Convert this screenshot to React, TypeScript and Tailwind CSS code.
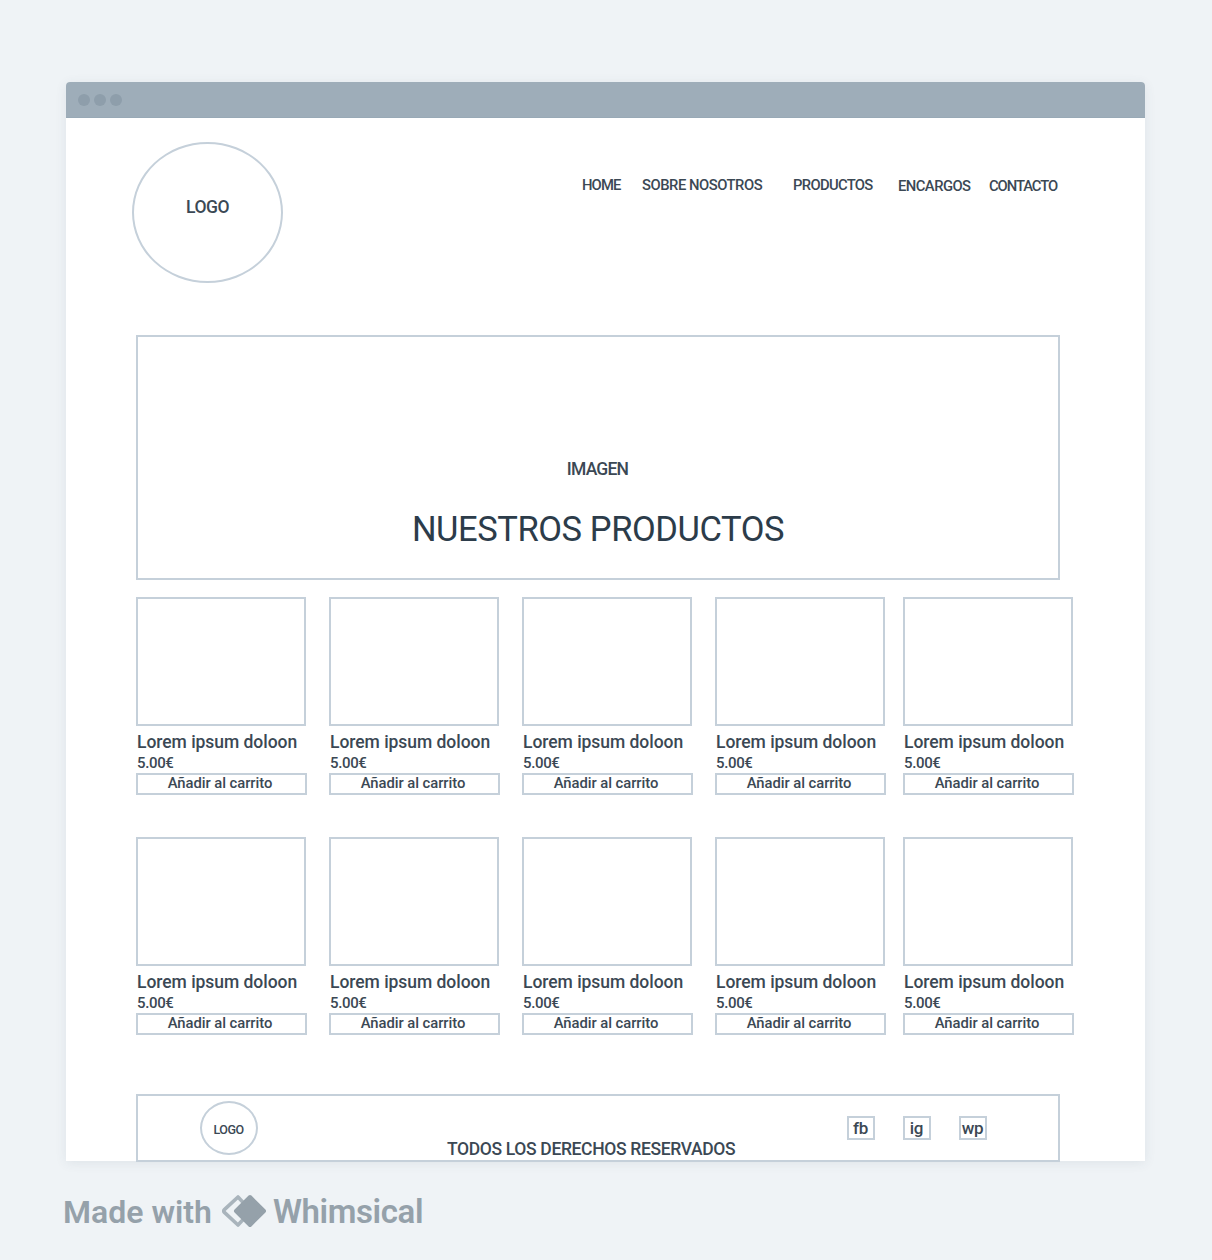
const navItems = [
  { label: 'HOME', box: 'w-[60px] tracking-[-0.9px]' },
  { label: 'SOBRE NOSOTROS', box: 'w-[151px] tracking-[-0.48px]' },
  { label: 'PRODUCTOS', box: 'w-[105px] tracking-[-0.68px]' },
  { label: 'ENCARGOS', box: 'w-[91px] pt-[0.5px] tracking-[-0.55px]' },
  { label: 'CONTACTO', box: 'pt-[0.5px] tracking-[-1.08px]' },
];

const cardOffsets = ['', 'ml-[22px]', 'ml-[22px]', 'ml-[22px]', 'ml-[17px]'];

function ProductCard({ offset }: { offset: string }) {
  return (
    <article className={`w-[171px] shrink-0 ${offset}`}>
      <div className="h-[129px] w-[170px] border-2 border-[#c5d0da]" />
      <h2 className="mt-[6px] pl-px text-[17.5px] leading-5 font-medium tracking-[-0.04px] whitespace-nowrap">
        Lorem ipsum doloon
      </h2>
      <p className="mt-px pl-px text-[15px] leading-5 tracking-[-0.35px] font-medium">5.00€</p>
      <button className="flex h-[22px] w-full items-center justify-center border-2 border-[#c5d0da] pr-[3px] pb-[2px] text-[14.8px] font-medium tracking-[-0.05px]">
        Añadir al carrito
      </button>
    </article>
  );
}

function ProductRow() {
  return (
    <div className="flex h-[198px]">
      {cardOffsets.map((offset, i) => (
        <ProductCard key={i} offset={offset} />
      ))}
    </div>
  );
}

function SocialBox({ label }: { label: string }) {
  return (
    <a className="flex h-6 w-7 items-center justify-center border-2 border-[#c5d0da] pr-px text-[17px] leading-5 font-medium tracking-[-0.3px]">
      {label}
    </a>
  );
}

export default function App() {
  return (
    <div className="h-[1260px] w-[1212px] overflow-hidden bg-[#eff3f6] pt-[82px] pl-[66px] font-['Roboto',sans-serif] text-[#3b4854]">
      <div className="h-[1079px] w-[1079px] rounded-t-[4px] bg-white shadow-[0_2px_12px_rgba(60,80,100,0.09)]">
        <div className="flex h-9 items-center gap-1 rounded-t-[4px] border-b border-[#98a9b6] bg-[#9eadb9] pl-3">
          <span className="size-3 rounded-full bg-[#8e9eab]" />
          <span className="size-3 rounded-full bg-[#8e9eab]" />
          <span className="size-3 rounded-full bg-[#8e9eab]" />
        </div>

        <header className="flex h-[217px] items-start pt-6 pl-[66px]">
          <div className="flex h-[141px] w-[151px] items-center justify-center rounded-[50%] border-2 border-[#c5d0da] pb-[10px] text-[17.5px] font-medium tracking-[-0.5px]">
            LOGO
          </div>
          <nav className="mt-[33px] ml-[299px] flex text-[14.8px] leading-5 font-medium whitespace-nowrap">
            {navItems.map((item) => (
              <a key={item.label} className={item.box}>
                {item.label}
              </a>
            ))}
          </nav>
        </header>

        <main className="pl-[70px]">
          <section className="flex h-[245px] w-[924px] flex-col items-center border-2 border-[#c5d0da] pt-[122px]">
            <p className="pr-px text-[17.5px] leading-5 font-medium tracking-[-0.8px]">IMAGEN</p>
            <h1 className="mt-[30px] text-[34.5px] leading-10 tracking-[-0.42px] text-[#2c3c4a]">
              NUESTROS PRODUCTOS
            </h1>
          </section>
          <section className="mt-[17px] flex flex-col gap-[42px]">
            <ProductRow />
            <ProductRow />
          </section>
        </main>

        <footer className="mt-[59px] ml-[70px] flex h-[68px] w-[924px] border-2 border-[#c5d0da] bg-white">
          <div className="mt-[5px] ml-[62px] flex h-[54px] w-[58px] shrink-0 items-center justify-center rounded-[50%] border-2 border-[#c5d0da] pt-[5px] pr-px text-[12.5px] font-medium tracking-[-0.55px]">
            LOGO
          </div>
          <p className="mt-[43px] ml-[189px] w-[400px] shrink-0 text-[17.5px] leading-5 font-medium tracking-[-0.35px] whitespace-nowrap">
            TODOS LOS DERECHOS RESERVADOS
          </p>
          <div className="mt-5 flex gap-7">
            <SocialBox label="fb" />
            <SocialBox label="ig" />
            <SocialBox label="wp" />
          </div>
        </footer>
      </div>

      <div className="mt-[30px] -ml-1 flex h-10 items-center font-medium text-[#95a1aa]">
        <span className="w-[159px] pt-[2px] pl-[1px] text-[32px] leading-10 font-semibold">Made with</span>
        <svg className="h-[34px] w-[46px]" viewBox="0 0 46 34" fill="none">
          <path d="M17 3 L3.4 15.6 Q2 17 3.4 18.4 L17 31 L30 17 Z" stroke="#a9b4bc" strokeWidth="3.6" strokeLinejoin="round" />
          <path d="M29 3 L43 17 L29 31 L15 17 Z" fill="#95a1aa" stroke="#95a1aa" strokeWidth="4" strokeLinejoin="round" />
        </svg>
        <span className="ml-[6px] pt-[2px] text-[33px] leading-10 font-semibold tracking-[-0.4px]">Whimsical</span>
      </div>
    </div>
  );
}
